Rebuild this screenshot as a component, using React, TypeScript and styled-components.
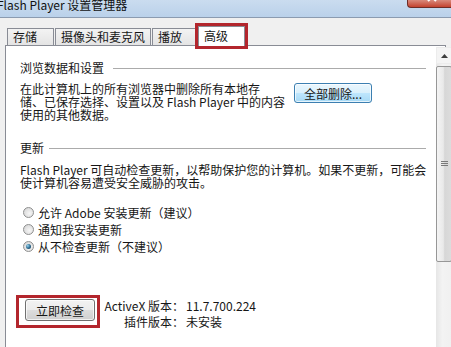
import React from 'react';
import styled, { createGlobalStyle } from 'styled-components';

const GlobalStyle = createGlobalStyle`
  html, body {
    margin: 0;
    padding: 0;
  }
  body {
    background: #f0f0f0;
    font-family: "Noto Sans CJK SC", "Liberation Sans", sans-serif;
    font-size: 12px;
    color: #161616;
    overflow: hidden;
  }
`;

const tabs = [
  { label: '存储', width: 47 },
  { label: '摄像头和麦克风', width: 96 },
  { label: '播放', width: 45 },
  { label: '高级', width: 47, active: true },
];

const updateOptions = [
  { label: '允许 Adobe 安装更新（建议）', checked: false },
  { label: '通知我安装更新', checked: false },
  { label: '从不检查更新（不建议）', checked: true },
];

const App: React.FC = () => {
  return (
    <Window>
      <GlobalStyle />
      <TitleBar>
        <Title>Flash Player 设置管理器</Title>
        <CloseButton>
          <svg width="10" height="10" viewBox="0 0 10 10">
            <path d="M1 1 L9 9 M9 1 L1 9" stroke="#fff" strokeWidth="2" />
          </svg>
        </CloseButton>
      </TitleBar>

      <TabStrip>
        {tabs.map((t) => (
          <Tab key={t.label} $w={t.width} $active={t.active}>
            {t.label}
          </Tab>
        ))}
      </TabStrip>

      <Panel>
        <Content>
          <SectionHeader $gap={9}>浏览数据和设置</SectionHeader>
          <ParaRow>
            <Paragraph $w={274}>
              <Line>在此计算机上的所有浏览器中删除所有本地存</Line>
              <Line>储、已保存选择、设置以及 Flash Player 中的内容</Line>
              <Line>使用的其他数据。</Line>
            </Paragraph>
            <Button $variant="focus" $w={78} $h={20}>
              全部删除...
            </Button>
          </ParaRow>

          <SectionHeader $top={20} $gap={5}>
            更新
          </SectionHeader>
          <Paragraph $top={8}>
            <Line>Flash Player 可自动检查更新，以帮助保护您的计算机。如果不更新，可能会</Line>
            <Line>使计算机容易遭受安全威胁的攻击。</Line>
          </Paragraph>

          <RadioList>
            {updateOptions.map((o) => (
              <RadioRow key={o.label}>
                <RadioDot $checked={o.checked} />
                {o.label}
              </RadioRow>
            ))}
          </RadioList>

          <BottomRow>
            <Highlight>
              <Button $w={70} $h={22}>
                立即检查
              </Button>
            </Highlight>
            <VersionGrid>
              <Label>ActiveX 版本：</Label>
              <Value>11.7.700.224</Value>
              <Label>插件版本：</Label>
              <Value>未安装</Value>
            </VersionGrid>
          </BottomRow>
        </Content>

        <ScrollBar>
          <ArrowButton>
            <svg width="7" height="4" viewBox="0 0 7 4">
              <path d="M0 4 L3.5 0 L7 4 Z" fill="#3d3d3d" />
            </svg>
          </ArrowButton>
          <Thumb>
            <svg width="7" height="6" viewBox="0 0 7 6">
              <path d="M0 0.5 H7 M0 2.5 H7 M0 4.5 H7" stroke="#7a7a7a" strokeWidth="1" />
            </svg>
          </Thumb>
        </ScrollBar>
      </Panel>
    </Window>
  );
};

const Window = styled.div`
  width: 451px;
  height: 347px;
  display: flex;
  flex-direction: column;
  overflow: hidden;
  background: #f0f0f0;
`;

const TitleBar = styled.div`
  flex: none;
  height: 17px;
  display: flex;
  align-items: flex-start;
  overflow: hidden;
  background: linear-gradient(to bottom, #cadcef, #bad1ea);
  border-bottom: 1px solid #8b9bb0;
`;

const Title = styled.div`
  margin: -2px 0 0 -3px;
  line-height: 14px;
  white-space: nowrap;
  color: #111;
`;

const CloseButton = styled.div`
  margin-left: auto;
  width: 44px;
  height: 8px;
  box-sizing: border-box;
  border: 1px solid #6e2d27;
  border-top: none;
  border-right: none;
  border-radius: 0 0 0 4px;
  background: linear-gradient(to bottom, #d98a7c, #c4432f);
  display: flex;
  justify-content: center;
  align-items: flex-end;
  overflow: hidden;

  svg {
    flex: none;
    margin: 0 0 5px 4px;
  }
`;

const TabStrip = styled.div`
  flex: none;
  height: 27px;
  display: flex;
  align-items: flex-end;
  gap: 1px;
  padding-left: 7px;
  position: relative;
  z-index: 1;
`;

const Tab = styled.div<{ $w: number; $active?: boolean }>`
  width: ${(p) => p.$w}px;
  box-sizing: border-box;
  height: ${(p) => (p.$active ? 20 : 17)}px;
  margin-bottom: ${(p) => (p.$active ? -1 : 0)}px;
  padding: ${(p) => (p.$active ? '2px 0 0 5px' : '0 0 0 5px')};
  line-height: ${(p) => (p.$active ? 14 : 16)}px;
  border: 1px solid #898c95;
  border-bottom: none;
  white-space: nowrap;
  background: ${(p) =>
    p.$active ? '#fff' : 'linear-gradient(to bottom, #f3f3f3, #e4e4e4)'};
  outline: ${(p) => (p.$active ? '3px solid #b3262d' : 'none')};
`;

const Panel = styled.div`
  flex: 1;
  min-height: 0;
  margin: 0 5px;
  display: flex;
  background: #fff;
  border: 1px solid #898c95;
  border-bottom: none;
`;

const Content = styled.div`
  flex: 1;
  display: flex;
  flex-direction: column;
  padding: 15px 10px 0 14px;
`;

const SectionHeader = styled.div<{ $top?: number; $gap: number }>`
  margin-top: ${(p) => p.$top ?? 0}px;
  display: flex;
  align-items: center;
  gap: ${(p) => p.$gap}px;
  line-height: 14px;

  &::after {
    content: '';
    flex: 1;
    height: 1px;
    background: #ababab;
  }
`;

const ParaRow = styled.div`
  margin-top: 7px;
  display: flex;
  align-items: flex-start;
`;

const Paragraph = styled.div<{ $w?: number; $top?: number }>`
  flex: none;
  width: ${(p) => (p.$w ? `${p.$w}px` : 'auto')};
  margin-top: ${(p) => p.$top ?? 0}px;
  line-height: 13px;
`;

const Line = styled.div`
  white-space: nowrap;
`;

const Button = styled.div<{ $variant?: 'focus'; $w: number; $h: number }>`
  flex: none;
  width: ${(p) => p.$w}px;
  height: ${(p) => p.$h}px;
  margin-top: 1px;
  box-sizing: border-box;
  display: flex;
  align-items: center;
  justify-content: center;
  border-radius: 3px;
  border: 1px solid ${(p) => (p.$variant === 'focus' ? '#3c7fb1' : '#707070')};
  background: ${(p) =>
    p.$variant === 'focus'
      ? 'linear-gradient(to bottom, #eaf6fd 0%, #d9f0fc 50%, #bee6fd 51%, #a7d9f5 100%)'
      : 'linear-gradient(to bottom, #f2f2f2 0%, #ebebeb 50%, #dddddd 51%, #cfcfcf 100%)'};
  box-shadow: inset 0 0 0 1px rgba(255, 255, 255, 0.7);
  white-space: nowrap;
`;

const RadioList = styled.div`
  margin-top: 15px;
  display: flex;
  flex-direction: column;
`;

const RadioRow = styled.div`
  height: 17px;
  display: flex;
  align-items: center;
  gap: 4px;
  padding-left: 3px;
  white-space: nowrap;
`;

const RadioDot = styled.span<{ $checked?: boolean }>`
  flex: none;
  width: 11px;
  height: 11px;
  box-sizing: border-box;
  border-radius: 50%;
  border: 1px solid #8e8f8f;
  background: radial-gradient(circle at 60% 60%, #f6f6f6 0%, #dcdcdc 70%, #cfcfcf 100%);
  display: flex;
  align-items: center;
  justify-content: center;

  &::after {
    content: '';
    display: ${(p) => (p.$checked ? 'block' : 'none')};
    width: 5px;
    height: 5px;
    border-radius: 50%;
    background: radial-gradient(circle at 35% 35%, #9ad4ee 0%, #2f6f95 50%, #0f2f4a 100%);
  }
`;

const BottomRow = styled.div`
  margin: 40px 0 0 -4px;
  display: flex;
  align-items: flex-start;
`;

const Highlight = styled.div`
  flex: none;
  border: 3px solid #b3262d;
  padding: 0 2px 4px 6px;
`;

const VersionGrid = styled.div`
  margin: 3px 0 0 4px;
  display: grid;
  grid-template-columns: 80px auto;
  line-height: 16px;
  white-space: nowrap;
`;

const Label = styled.span`
  text-align: right;
`;

const Value = styled.span`
  padding-left: 2px;
`;

const ScrollBar = styled.div`
  flex: none;
  width: 16px;
  margin: 1px 1px 0 0;
  display: flex;
  flex-direction: column;
  gap: 2px;
  background: linear-gradient(to right, #e6e6e6, #f3f3f3 40%, #f0f0f0);
`;

const ArrowButton = styled.div`
  height: 17px;
  box-sizing: border-box;
  display: flex;
  align-items: center;
  justify-content: center;
  border: 1px solid #ececec;
  background: #f4f4f4;
`;

const Thumb = styled.div`
  height: 196px;
  box-sizing: border-box;
  border: 1px solid #979797;
  border-radius: 2px;
  background: linear-gradient(to right, #f4f4f4 0%, #e9e9e9 45%, #d7d7d7 55%, #dcdcdc 100%);
  display: flex;
  align-items: center;
  justify-content: center;
`;

export default App;
